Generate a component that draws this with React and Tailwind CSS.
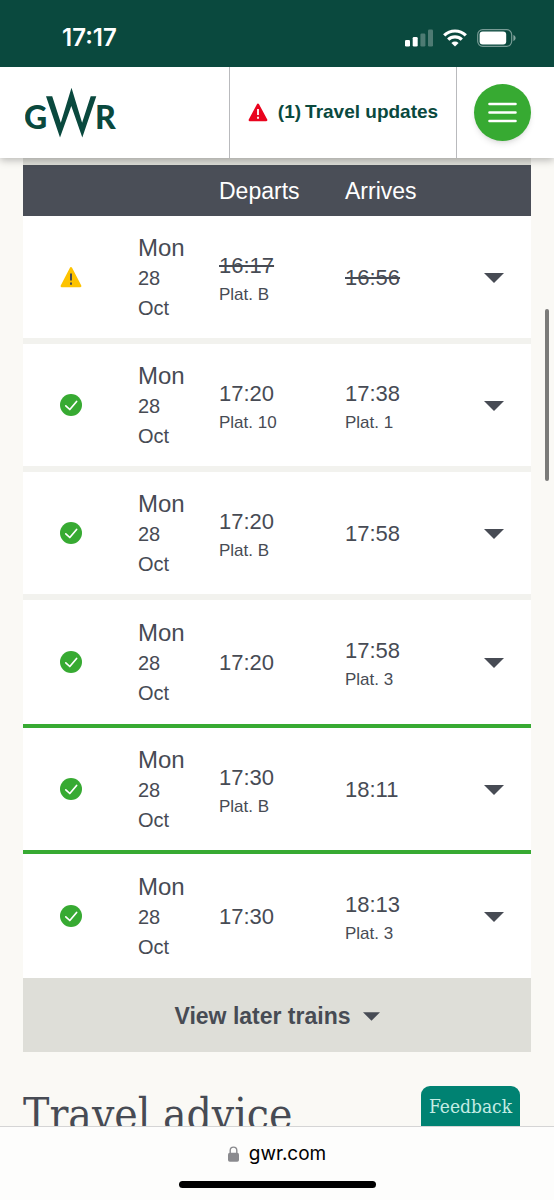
import React from 'react';
import clsx from 'clsx';

const trains = [
  { id: 1, status: 'warning', departs: '16:17', departsPlat: 'B', arrives: '16:56', cancelled: true },
  { id: 2, status: 'ok', departs: '17:20', departsPlat: '10', arrives: '17:38', arrivesPlat: '1' },
  { id: 3, status: 'ok', departs: '17:20', departsPlat: 'B', arrives: '17:58' },
  { id: 4, status: 'ok', departs: '17:20', arrives: '17:58', arrivesPlat: '3', edge: 'above' },
  { id: 5, status: 'ok', departs: '17:30', departsPlat: 'B', arrives: '18:11', edge: 'selected' },
  { id: 6, status: 'ok', departs: '17:30', arrives: '18:13', arrivesPlat: '3', edge: 'last' },
];

function StatusBar() {
  return (
    <div className="relative z-20 h-[67px] shrink-0 bg-[#0a493e] pl-[62px] pr-[38px] pt-2 flex items-center justify-between">
      <span className="font-[Inter,sans-serif] font-semibold text-2xl leading-6 text-white">17:17</span>
      <div className="flex items-center gap-[10px]">
        <svg width="28" height="18" viewBox="0 0 28 18" fill="#fff" aria-hidden="true">
          <rect x="0" y="11" width="5" height="6.5" rx="1.3" />
          <rect x="7.7" y="8" width="5" height="9.5" rx="1.3" />
          <rect x="15.4" y="4.4" width="5" height="13.1" rx="1.3" opacity=".28" />
          <rect x="23" y="0.4" width="5" height="17.1" rx="1.3" opacity=".28" />
        </svg>
        <svg width="24" height="18" viewBox="0 0 24 18" fill="none" stroke="#fff" strokeWidth="3.2" aria-hidden="true">
          <path d="M1.2 6.4a15.4 15.4 0 0 1 21.6 0" />
          <path d="M5.2 10.6a9.7 9.7 0 0 1 13.6 0" />
          <path d="M12 17.6l-3.6-3.7a5.2 5.2 0 0 1 7.2 0z" fill="#fff" stroke="none" />
        </svg>
        <svg width="39" height="18" viewBox="0 0 39 18" aria-hidden="true">
          <rect x=".7" y=".7" width="34" height="16.6" rx="5" fill="none" stroke="#fff" strokeOpacity=".45" strokeWidth="1.2" />
          <rect x="2.6" y="2.6" width="26.6" height="12.8" rx="3" fill="#fff" />
          <path d="M36.4 6v6c1.4-.6 2.2-1.7 2.2-3s-.8-2.4-2.2-3z" fill="#fff" opacity=".5" />
        </svg>
      </div>
    </div>
  );
}

function Logo() {
  return (
    <svg width="92" height="52" viewBox="0 0 92 52" fill="#0a493e" role="img" aria-label="GWR">
      <text x="-1" y="42" fontFamily="Lato, sans-serif" fontWeight="900" fontSize="32">G</text>
      <path d="M21 9.2h6.2l8.6 26.6L46.5.8l10.6 35 8.6-26.6h5.6L57.3 50.6 46.3 19 35 50.6z" />
      <text x="70" y="42" fontFamily="Lato, sans-serif" fontWeight="900" fontSize="32">R</text>
    </svg>
  );
}

function Header() {
  return (
    <header className="relative z-10 h-[91px] shrink-0 bg-white flex shadow-[0_2px_8px_rgba(0,0,0,0.28)]">
      <div className="flex-1 pl-[25px] flex items-center">
        <a href="#home"><Logo /></a>
      </div>
      <a
        href="#updates"
        className="w-[228px] border-x border-[#b9babd] flex items-center justify-center gap-[10px] text-[19px] font-bold text-[#0a493e]"
      >
        <svg width="20" height="19" viewBox="0 0 20 19" aria-hidden="true">
          <path d="M10 1.8L18.2 17H1.8z" fill="#e9041e" stroke="#e9041e" strokeWidth="2.4" strokeLinejoin="round" />
          <path d="M10 6v6M10 13.8v2" stroke="#fff" strokeWidth="1.8" />
        </svg>
        <span className="flex gap-1">
          <span>(1)</span>
          <span>Travel updates</span>
        </span>
      </a>
      <div className="w-[97px] pl-[17px] flex items-center">
        <button aria-label="Menu" className="size-[57px] rounded-full bg-[#37aa32] shadow-md flex items-center justify-center">
          <svg width="29" height="21" viewBox="0 0 29 21" stroke="#fff" strokeWidth="2.6" strokeLinecap="round" aria-hidden="true">
            <path d="M1.5 2h26M1.5 10.5h26M1.5 19h26" />
          </svg>
        </button>
      </div>
    </header>
  );
}

function StatusIcon({ status }) {
  if (status === 'warning') {
    return (
      <svg width="22" height="22" viewBox="0 0 22 22" role="img" aria-label="Disrupted">
        <path d="M11 2.2L20.2 20H1.8z" fill="#fdc300" stroke="#fdc300" strokeWidth="2.4" strokeLinejoin="round" />
        <path d="M11 7.4v7M11 16.6v2.2" stroke="#474b54" strokeWidth="2" />
      </svg>
    );
  }
  return (
    <svg width="22" height="22" viewBox="0 0 22 22" role="img" aria-label="On time">
      <circle cx="11" cy="11" r="11" fill="#37aa32" />
      <path d="M5.8 11.8l4 3.7 6.8-8" fill="none" stroke="#fff" strokeWidth="1.7" strokeLinecap="round" strokeLinejoin="round" />
    </svg>
  );
}

function Caret({ className }) {
  return (
    <svg viewBox="0 0 20 10" className={className} fill="#474b54" aria-hidden="true">
      <path d="M0 0h20L10 10z" />
    </svg>
  );
}

function Stop({ time, platform, cancelled }) {
  return (
    <div className={clsx(platform && 'pt-1.5')}>
      <span className={clsx('block text-[22px] leading-[29px]', cancelled && 'line-through decoration-2')}>{time}</span>
      {platform && <span className="block text-[17px] leading-[29px]">Plat. {platform}</span>}
    </div>
  );
}

function TrainRow({ train }) {
  const edge = {
    above: 'h-[128px] border-b-4 border-[#37aa32]',
    selected: 'h-[126px] border-b-4 border-[#37aa32]',
    last: 'h-[124px]',
  };
  const cell = clsx('p-0', edge[train.edge] || 'h-[128px] border-b-6 border-[#f2f2ee]');

  return (
    <tr className="bg-white">
      <td className={clsx(cell, 'pl-[37px]')}>
        <StatusIcon status={train.status} />
      </td>
      <td className={clsx(cell, 'pt-0.5')}>
        <span className="block text-2xl leading-[30px]">Mon</span>
        <span className="block text-xl leading-[30px]">28</span>
        <span className="block text-xl leading-[30px]">Oct</span>
      </td>
      <td className={cell}>
        <Stop time={train.departs} platform={train.departsPlat} cancelled={train.cancelled} />
      </td>
      <td className={cell}>
        <Stop time={train.arrives} platform={train.arrivesPlat} cancelled={train.cancelled} />
      </td>
      <td className={cell}>
        <button aria-label="Show details" className="w-full h-10 pt-0.5 flex items-center justify-center">
          <Caret className="w-5 h-[10px]" />
        </button>
      </td>
    </tr>
  );
}

export default function App() {
  return (
    <div className="h-screen flex flex-col bg-[#faf9f5] font-['Liberation_Sans',Arial,sans-serif] text-[#474b54]">
      <StatusBar />
      <Header />

      <main className="relative flex-1 min-h-0 overflow-hidden px-[23px]">
        <div className="h-[7px] bg-[#deded8]" />
        <table className="w-full table-fixed border-separate border-spacing-0 text-left">
          <thead>
            <tr className="h-[51px] bg-[#4a4e57] text-[23px] text-white">
              <th className="w-[115px] p-0" aria-label="Status" />
              <th className="w-[81px] p-0" aria-label="Date" />
              <th className="w-[126px] p-0 pt-0.5 font-normal">Departs</th>
              <th className="p-0 pt-0.5 font-normal">Arrives</th>
              <th className="w-[74px] p-0" aria-label="Details" />
            </tr>
          </thead>
          <tbody>
            {trains.map((train) => (
              <TrainRow key={train.id} train={train} />
            ))}
          </tbody>
        </table>

        <button className="w-full h-[74px] bg-[#deded8] pt-0.5 flex items-center justify-center gap-3 text-[23px] font-bold">
          View later trains
          <Caret className="w-[17px] h-[9px]" />
        </button>

        <h2 className="mt-9 text-[44px] leading-[54px] font-['DejaVu_Serif_Condensed','DejaVu_Serif',serif] whitespace-nowrap">
          Travel advice
        </h2>

        <button className="absolute bottom-0 right-[34px] w-[99px] h-10 rounded-t-[9px] bg-[#008272] text-[19px] text-[#c4ece4] font-['DejaVu_Serif_Condensed','DejaVu_Serif',serif]">
          Feedback
        </button>
        <div className="absolute right-[5px] top-[151px] w-1 h-[172px] rounded-full bg-[#7b7b79]" />
      </main>

      <footer className="h-[74px] shrink-0 border-t border-[#d5d5d5] bg-[#fdfdfc] flex flex-col items-center justify-between pt-[14px] pb-3">
        <div className="flex items-center gap-[10px] font-[Inter,sans-serif] text-[19px] leading-[26px] text-black">
          <svg width="11" height="16" viewBox="0 0 11 16" aria-hidden="true">
            <rect x="0" y="6.8" width="11" height="9" rx="1.8" fill="#8a8a8e" />
            <path d="M2.2 7.5V4.4a3.3 3.3 0 0 1 6.6 0v3.1" fill="none" stroke="#8a8a8e" strokeWidth="1.4" />
          </svg>
          gwr.com
        </div>
        <div className="w-[197px] h-[7px] rounded-full bg-black" />
      </footer>
    </div>
  );
}
